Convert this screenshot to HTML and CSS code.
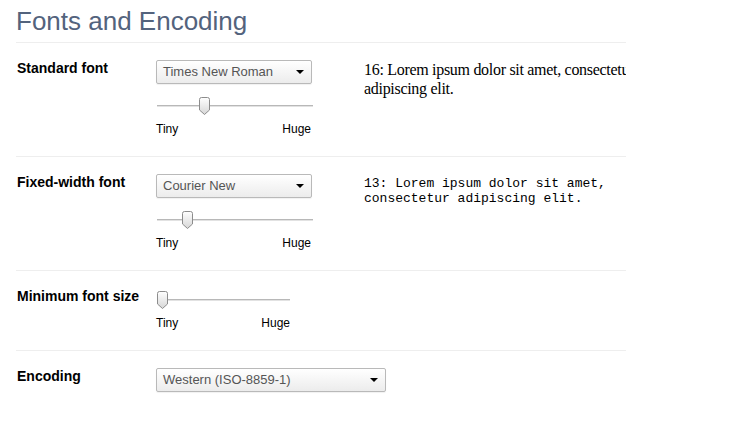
FILE: index.html
```html
<!DOCTYPE html>
<html lang="en">
<head>
    <meta charset="UTF-8">
    <title>Fonts and Encoding</title>
    <link rel="stylesheet" href="styles.css">
</head>
<body>

<div class="page">
    <h1 class="title">Fonts and Encoding</h1>

    <section class="row">
        <div class="label">Standard font</div>
        <div class="controls">
            <div class="select select-narrow">Times New Roman<span class="arrow"></span></div>
            <div class="slider">
                <div class="track"></div>
                <svg class="thumb" style="left: 43px" width="11" height="18" viewBox="0 0 11 18">
                    <defs>
                        <linearGradient id="tg1" x1="0" y1="0" x2="0" y2="1">
                            <stop offset="0" stop-color="#ffffff"/>
                            <stop offset="1" stop-color="#d6d6d6"/>
                        </linearGradient>
                    </defs>
                    <path d="M0.5 2.5 Q0.5 0.5 2.5 0.5 H8.5 Q10.5 0.5 10.5 2.5 V13 L5.5 17.5 L0.5 13 Z" fill="url(#tg1)" stroke="#8c8c8c"/>
                </svg>
            </div>
            <div class="range-labels"><span>Tiny</span><span>Huge</span></div>
        </div>
        <div class="sample">
            <p class="serif">16: Lorem ipsum dolor sit amet, consectetur adipiscing elit.</p>
        </div>
    </section>

    <section class="row">
        <div class="label">Fixed-width font</div>
        <div class="controls">
            <div class="select select-narrow">Courier New<span class="arrow"></span></div>
            <div class="slider">
                <div class="track"></div>
                <svg class="thumb" style="left: 26px" width="11" height="18" viewBox="0 0 11 18">
                    <defs>
                        <linearGradient id="tg2" x1="0" y1="0" x2="0" y2="1">
                            <stop offset="0" stop-color="#ffffff"/>
                            <stop offset="1" stop-color="#d6d6d6"/>
                        </linearGradient>
                    </defs>
                    <path d="M0.5 2.5 Q0.5 0.5 2.5 0.5 H8.5 Q10.5 0.5 10.5 2.5 V13 L5.5 17.5 L0.5 13 Z" fill="url(#tg2)" stroke="#8c8c8c"/>
                </svg>
            </div>
            <div class="range-labels"><span>Tiny</span><span>Huge</span></div>
        </div>
        <div class="sample">
            <p class="mono">13: Lorem ipsum dolor sit amet, consectetur adipiscing elit.</p>
        </div>
    </section>

    <section class="row row-min">
        <div class="label">Minimum font size</div>
        <div class="controls">
            <div class="slider slider-short">
                <div class="track"></div>
                <svg class="thumb" style="left: 1px" width="11" height="18" viewBox="0 0 11 18">
                    <defs>
                        <linearGradient id="tg3" x1="0" y1="0" x2="0" y2="1">
                            <stop offset="0" stop-color="#ffffff"/>
                            <stop offset="1" stop-color="#d6d6d6"/>
                        </linearGradient>
                    </defs>
                    <path d="M0.5 2.5 Q0.5 0.5 2.5 0.5 H8.5 Q10.5 0.5 10.5 2.5 V13 L5.5 17.5 L0.5 13 Z" fill="url(#tg3)" stroke="#8c8c8c"/>
                </svg>
            </div>
            <div class="range-labels slider-short"><span>Tiny</span><span>Huge</span></div>
        </div>
        <div class="sample"></div>
    </section>

    <section class="row row-last">
        <div class="label">Encoding</div>
        <div class="controls controls-wide">
            <div class="select select-wide">Western (ISO-8859-1)<span class="arrow"></span></div>
        </div>
    </section>
</div>

</body>
</html>
```

FILE: styles.css
```css
body {
    margin: 0;
    background-color: #fff;
    font-family: 'Liberation Sans', Arial, sans-serif;
    color: #000;
}
.page {
    width: 610px;
    padding-left: 16px;
}
.title {
    margin: 0;
    padding: 6px 0 6px 0;
    font-size: 26px;
    line-height: 30px;
    font-weight: normal;
    color: #53637d;
    border-bottom: 1px solid #eeeeee;
}
.row {
    display: grid;
    grid-template-columns: 139px 208px 262px;
    align-items: start;
    padding: 17px 0 20px 1px;
    border-bottom: 1px solid #eeeeee;
}
.row-last {
    border-bottom: none;
}
.row-min .controls {
    padding-top: 2px;
}
.controls-wide {
    grid-column: 2 / 4;
}
.label {
    font-size: 14px;
    line-height: 17px;
    font-weight: bold;
}
.select {
    position: relative;
    box-sizing: border-box;
    height: 24px;
    padding-left: 6px;
    border: 1px solid #b9b9b9;
    border-radius: 2px;
    background: linear-gradient(#ffffff, #ececec);
    box-shadow: 0 1px 1px rgba(0, 0, 0, 0.06);
    font-size: 13px;
    line-height: 22px;
    color: #555;
}
.select-narrow {
    width: 156px;
}
.select-wide {
    width: 230px;
}
.arrow {
    position: absolute;
    right: 7px;
    top: 9px;
    width: 0;
    height: 0;
    border-left: 4px solid transparent;
    border-right: 4px solid transparent;
    border-top: 4px solid #000;
}
.slider {
    position: relative;
    width: 157px;
    height: 20px;
    margin-top: 12px;
}
.row-min .slider {
    margin-top: 0;
}
.slider-short {
    width: 134px;
}
.track {
    position: absolute;
    left: 1px;
    right: 0;
    top: 9px;
    height: 1px;
    background-color: #b8b8b8;
    border-bottom: 1px solid #e2e2e2;
}
.thumb {
    position: absolute;
    top: 1px;
    display: block;
}
.range-labels {
    display: flex;
    justify-content: space-between;
    width: 155px;
    margin-top: 6px;
    font-size: 12px;
    line-height: 14px;
}
.range-labels.slider-short {
    width: 134px;
}
.sample {
    overflow: hidden;
}
.sample p {
    width: 300px;
    margin: 0;
}
.serif {
    font-family: 'Liberation Serif', 'Times New Roman', serif;
    font-size: 16px;
    line-height: 19px;
    letter-spacing: -0.3px;
}
.mono {
    margin-top: 2px !important;
    font-family: 'Liberation Mono', 'Courier New', monospace;
    font-size: 13px;
    line-height: 15px;
}
```
